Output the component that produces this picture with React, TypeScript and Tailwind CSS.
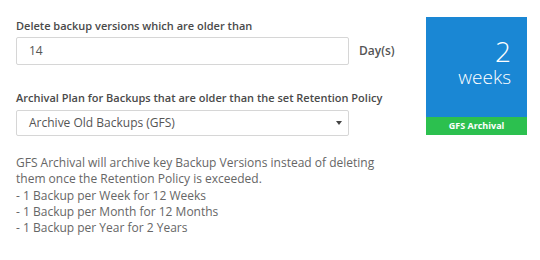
export default function App() {
  return (
    <div className="w-[540px] h-[260px] bg-white flex font-['Open_Sans',sans-serif] overflow-hidden">
      {/* left: form fields */}
      <div className="pl-4 pt-[18px] w-[410px]">
        <div className="text-[11px] leading-4 font-semibold text-[#4a4a4a]">
          Delete backup versions which are older than
        </div>
        <div className="flex items-center mt-[3px]">
          <div className="w-[333px] h-[28px] border border-[#d6d6d6] rounded-[2px] flex items-center pl-3 text-[12px] text-[#555]">
            14
          </div>
          <span className="ml-[10px] text-[12px] font-semibold text-[#555]">Day(s)</span>
        </div>

        <div className="mt-[25px] text-[11px] leading-4 font-semibold text-[#4a4a4a]">
          Archival Plan for Backups that are older than the set Retention Policy
        </div>
        <div className="mt-[4px] w-[333px] h-[26px] border border-[#d6d6d6] rounded-[2px] flex items-center justify-between pl-3 pr-[4px] text-[12px] text-[#555]">
          <span>Archive Old Backups (GFS)</span>
          <svg width="10" height="8" viewBox="0 0 10 8">
            <path d="M2 2h6L5 6z" fill="#444" />
          </svg>
        </div>

        <div className="mt-[19px] text-[12px] leading-[16.3px] text-[#666]">
          <p>GFS Archival will archive key Backup Versions instead of deleting</p>
          <p>them once the Retention Policy is exceeded.</p>
          <p>- 1 Backup per Week for 12 Weeks</p>
          <p>- 1 Backup per Month for 12 Months</p>
          <p>- 1 Backup per Year for 2 Years</p>
        </div>
      </div>

      {/* right: summary tile */}
      <div className="ml-4 mt-[17px] w-[101px] h-[118px] flex flex-col">
        <div className="flex-1 bg-[#1a87d4] text-white flex flex-col items-end pr-4 pt-[21px] font-light">
          <span className="text-[28px] leading-[26px]">2</span>
          <span className="text-[19px] leading-[22px] mt-[2px]">weeks</span>
        </div>
        <div className="h-[18px] bg-[#2cc04f] text-white text-[9px] font-bold flex items-center justify-center">
          GFS Archival
        </div>
      </div>
    </div>
  )
}
